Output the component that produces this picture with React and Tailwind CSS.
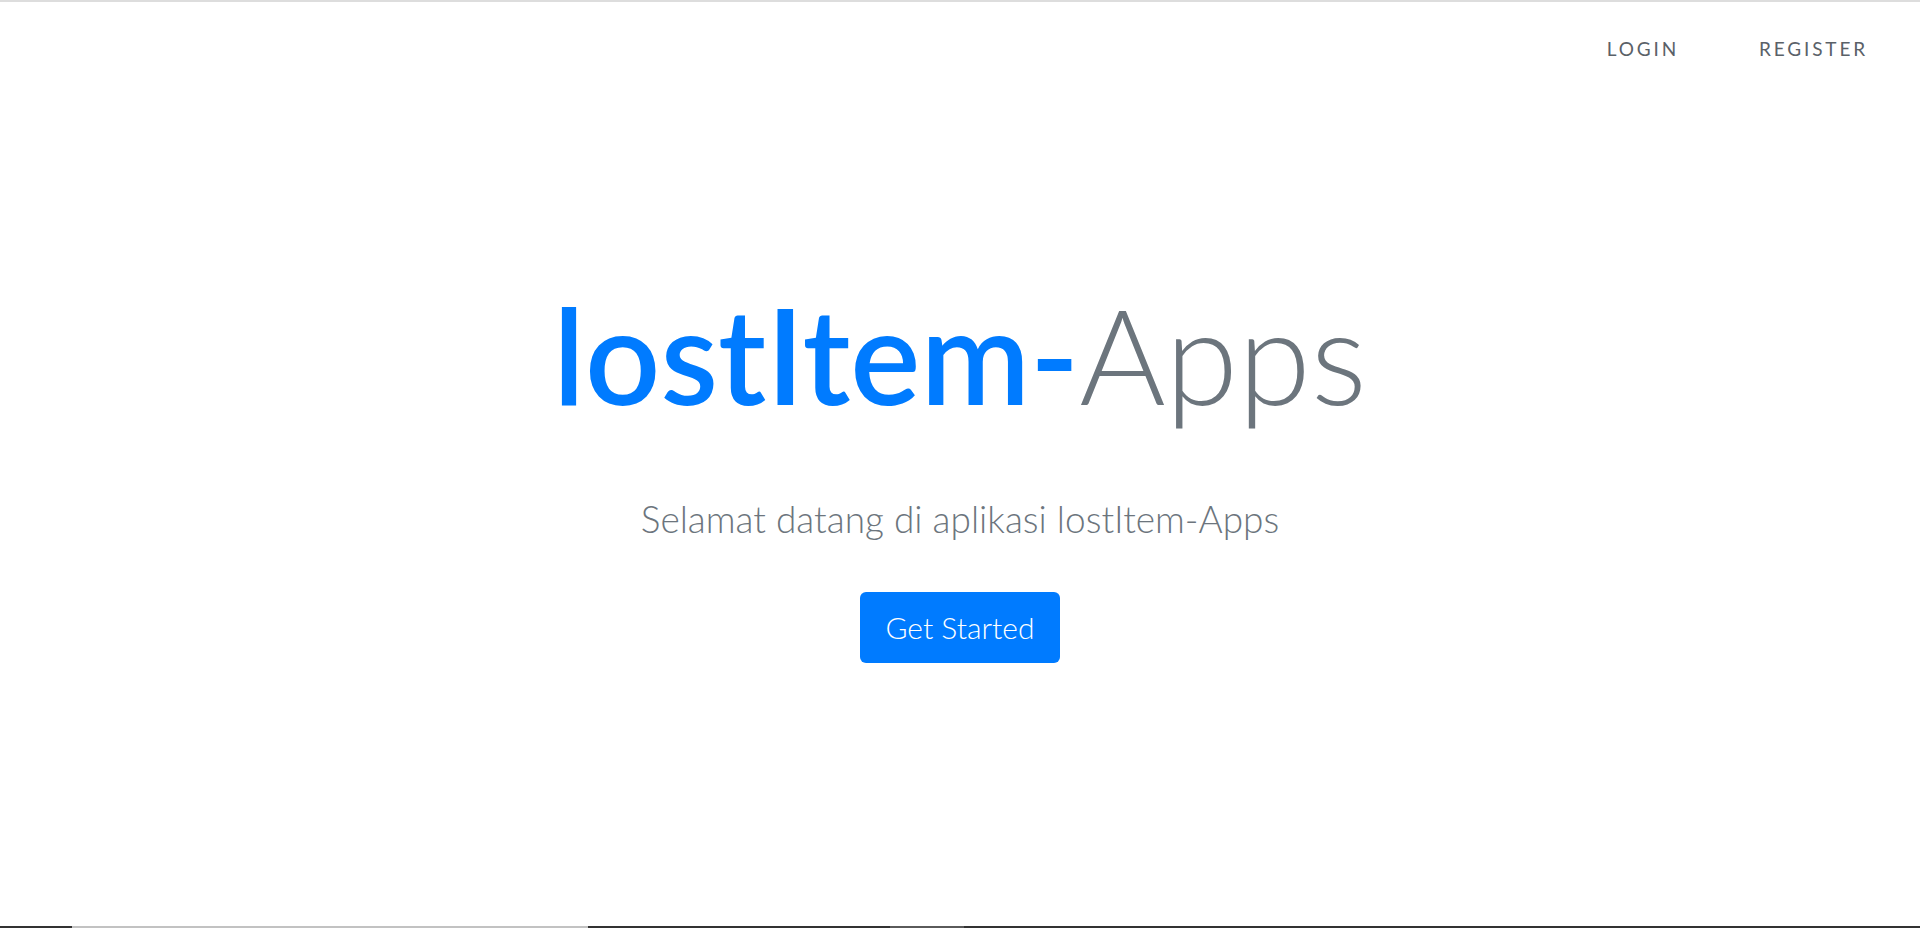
import React from "react";

const NavBar = () => {
  return (
    <nav className="flex justify-end items-center h-[94px] pr-[12px]">
      <a href="#login" className="px-[40px] text-[19px] tracking-[0.15em] text-[#5a6168]">
        LOGIN
      </a>
      <a href="#register" className="px-[40px] text-[19px] tracking-[0.15em] text-[#5a6168]">
        REGISTER
      </a>
    </nav>
  );
};

// thin strip at the very bottom of the capture
const BottomStrip = () => {
  return (
    <div className="flex h-[2px] w-full">
      <div className="w-[72px] bg-[#333333]" />
      <div className="w-[516px] bg-[#c2c2c2]" />
      <div className="w-[302px] bg-[#333333]" />
      <div className="w-[74px] bg-[#5a5a5a]" />
      <div className="flex-1 bg-[#333333]" />
    </div>
  );
};

const App = () => {
  return (
    <div
      className="h-[928px] w-full bg-white flex flex-col border-t-2 border-[#dddddd] overflow-hidden"
      style={{ fontFamily: "Lato, 'Open Sans', sans-serif" }}
    >
      <NavBar />

      <main className="flex-1 flex flex-col items-center">
        <h1 className="mt-[192px] text-[132px] leading-none whitespace-nowrap">
          <span className="font-semibold text-[#007bff]">lostItem-</span>
          <span className="font-light text-[#6c757d]">Apps</span>
        </h1>

        <p className="mt-[80px] text-[37px] font-light text-[#6c757d] leading-none">
          Selamat datang di aplikasi lostItem-Apps
        </p>

        <button
          onClick={() => {}}
          className="mt-[55px] w-[200px] h-[71px] rounded-[6px] bg-[#007bff] text-white text-[30px] font-light"
        >
          Get Started
        </button>
      </main>

      <BottomStrip />
    </div>
  );
};

export default App;
